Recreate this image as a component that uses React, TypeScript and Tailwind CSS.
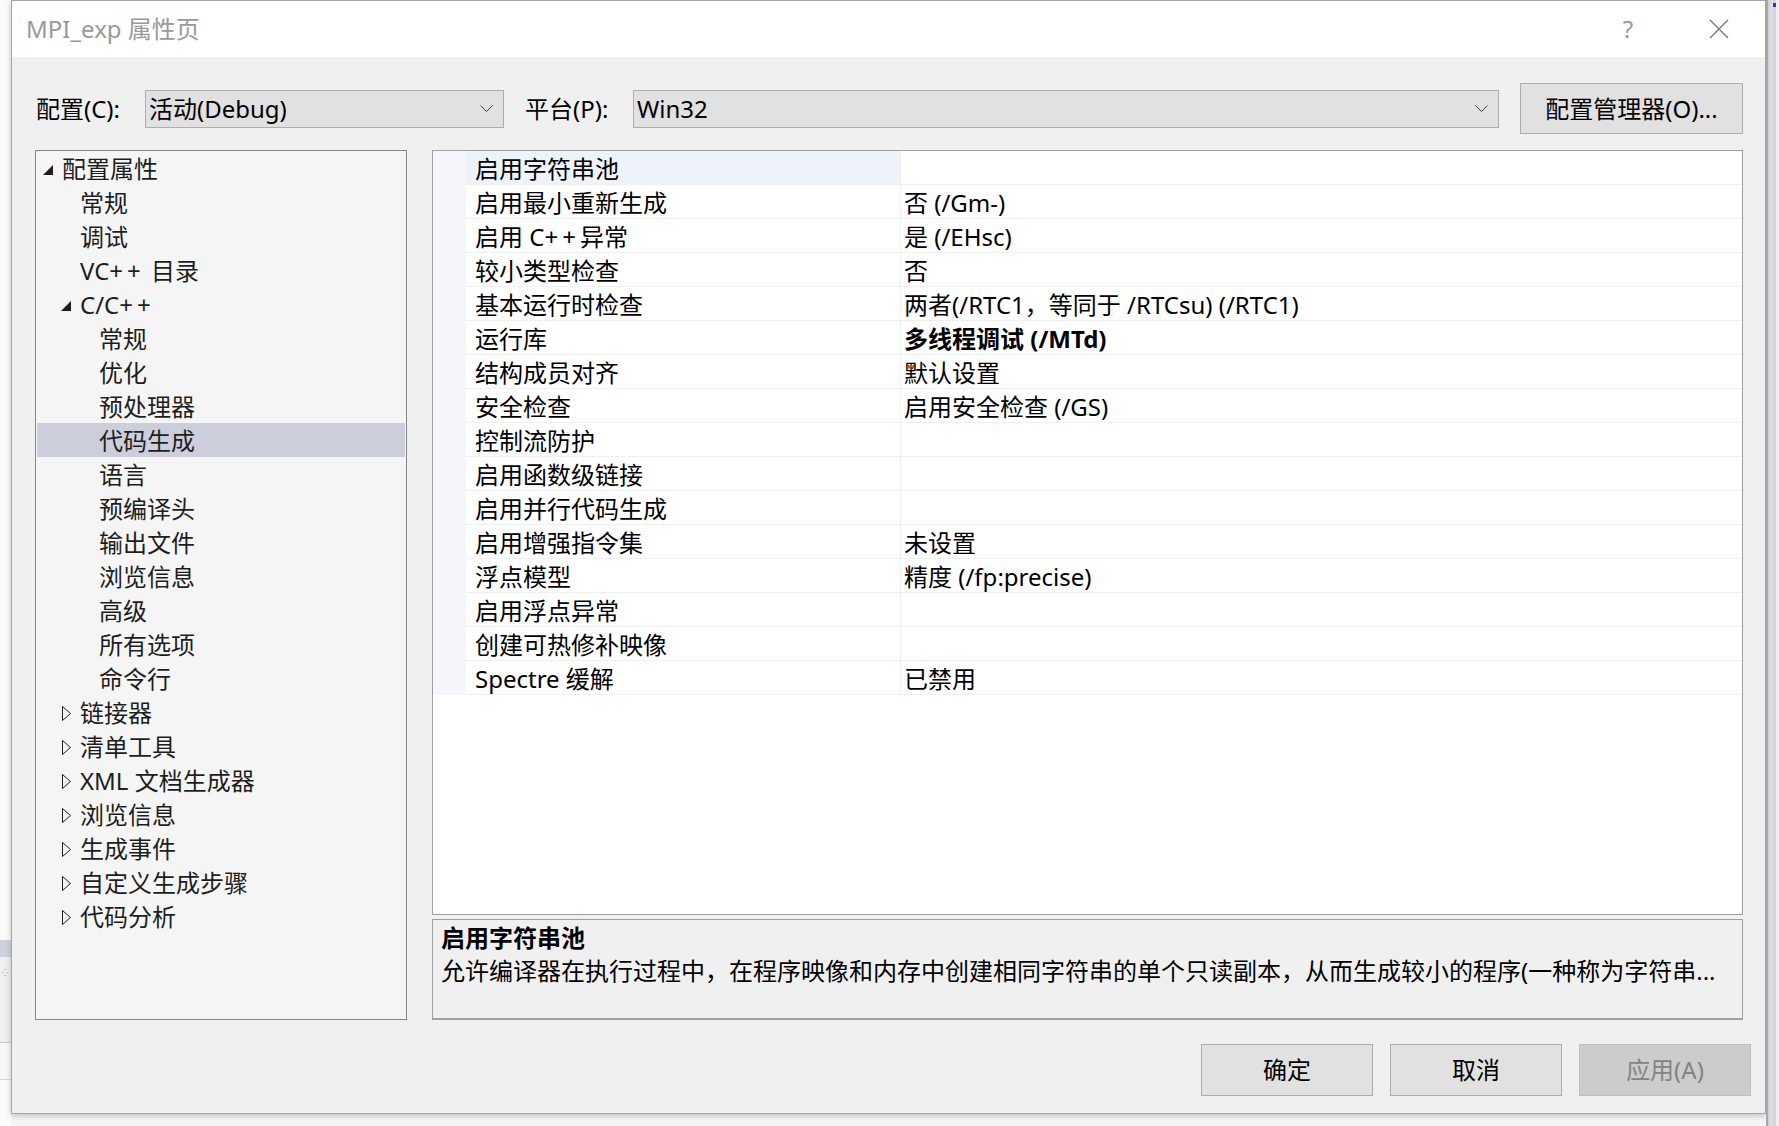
import type { ReactNode } from 'react'

type TreeItem = {
  label: string
  level: 0 | 1 | 2
  arrow?: 'open' | 'closed'
  selected?: boolean
}

const treeItems: TreeItem[] = [
  { label: '配置属性', level: 0, arrow: 'open' },
  { label: '常规', level: 1 },
  { label: '调试', level: 1 },
  { label: 'VC++ 目录', level: 1 },
  { label: 'C/C++', level: 1, arrow: 'open' },
  { label: '常规', level: 2 },
  { label: '优化', level: 2 },
  { label: '预处理器', level: 2 },
  { label: '代码生成', level: 2, selected: true },
  { label: '语言', level: 2 },
  { label: '预编译头', level: 2 },
  { label: '输出文件', level: 2 },
  { label: '浏览信息', level: 2 },
  { label: '高级', level: 2 },
  { label: '所有选项', level: 2 },
  { label: '命令行', level: 2 },
  { label: '链接器', level: 1, arrow: 'closed' },
  { label: '清单工具', level: 1, arrow: 'closed' },
  { label: 'XML 文档生成器', level: 1, arrow: 'closed' },
  { label: '浏览信息', level: 1, arrow: 'closed' },
  { label: '生成事件', level: 1, arrow: 'closed' },
  { label: '自定义生成步骤', level: 1, arrow: 'closed' },
  { label: '代码分析', level: 1, arrow: 'closed' },
]

const props: { name: string; value: string; bold?: boolean }[] = [
  { name: '启用字符串池', value: '' },
  { name: '启用最小重新生成', value: '否 (/Gm-)' },
  { name: '启用 C++ 异常', value: '是 (/EHsc)' },
  { name: '较小类型检查', value: '否' },
  { name: '基本运行时检查', value: '两者(/RTC1，等同于 /RTCsu) (/RTC1)' },
  { name: '运行库', value: '多线程调试 (/MTd)', bold: true },
  { name: '结构成员对齐', value: '默认设置' },
  { name: '安全检查', value: '启用安全检查 (/GS)' },
  { name: '控制流防护', value: '' },
  { name: '启用函数级链接', value: '' },
  { name: '启用并行代码生成', value: '' },
  { name: '启用增强指令集', value: '未设置' },
  { name: '浮点模型', value: '精度 (/fp:precise)' },
  { name: '启用浮点异常', value: '' },
  { name: '创建可热修补映像', value: '' },
  { name: 'Spectre 缓解', value: '已禁用' },
]

const indent = {
  0: 'pl-[8px]',
  1: 'pl-[26px]',
  2: 'pl-[45px]',
}

// the dialog font spaces "++" wider than Noto Sans does
function Label({ text }: { text: string }) {
  const parts = text.split('++')
  if (parts.length === 1) return <>{text}</>
  return (
    <>
      {parts[0]}
      <span className="tracking-[4px]">++</span>
      {parts[1]}
    </>
  )
}

function Chevron() {
  return (
    <svg width="13" height="7" viewBox="0 0 13 7" className="shrink-0">
      <polyline points="0.5,0.5 6.5,6.5 12.5,0.5" fill="none" stroke="#404040" strokeWidth="1" />
    </svg>
  )
}

function Dropdown({ value, width }: { value: string; width: string }) {
  return (
    <div
      className={`${width} h-[38px] flex items-center justify-between pl-[3px] pr-[10px] bg-[#e1e1e1] border border-[#adadad]`}
    >
      <span>{value}</span>
      <Chevron />
    </div>
  )
}

function Button({ children, disabled, width }: { children: ReactNode; disabled?: boolean; width: string }) {
  return (
    <div
      className={`${width} flex items-center justify-center border ${
        disabled ? 'bg-[#cccccc] border-[#bfbfbf] text-[#838383]' : 'bg-[#e1e1e1] border-[#adadad] text-black'
      }`}
    >
      {children}
    </div>
  )
}

function Arrow({ kind }: { kind?: 'open' | 'closed' }) {
  if (kind === 'open') {
    return (
      <svg width="10" height="10" viewBox="0 0 10 10" className="-ml-[1px] mt-[1px]">
        <polygon points="10,0 10,10 0,10" fill="#1e1e1e" />
      </svg>
    )
  }
  if (kind === 'closed') {
    return (
      <svg width="10" height="15" viewBox="0 0 10 15">
        <polygon points="0.5,0.5 8.5,7.5 0.5,14.5" fill="none" stroke="#1e1e1e" strokeWidth="1" />
      </svg>
    )
  }
  return null
}

export default function App() {
  return (
    <div className="w-[1779px] h-[1126px] flex items-start overflow-hidden bg-[#f6f6f6] text-[24px] text-[#1e1e1e] font-['Noto_Sans','Noto_Sans_CJK_SC',sans-serif]">
      {/* what shows of the window behind, left side */}
      <div className="w-[11px] h-full flex flex-col bg-[#fbfbfb]">
        <div className="h-[940px]" />
        <div className="h-[17px] bg-[#cfd1dc]" />
        <div className="h-[85px] bg-[#f0f0f0] flex flex-col pl-[2px] pt-[12px]">
          <span className="text-[8px] leading-none text-[#888]">⁘</span>
        </div>
        <div className="h-px bg-[#c8c8c8]" />
        <div className="h-[36px] bg-[#f8f8f8]" />
        <div className="h-px bg-[#d8d8d8]" />
      </div>

      {/* dialog */}
      <div className="w-[1755px] h-[1114px] flex flex-col bg-[#f0f0f0] border border-[#a5a5a5] shadow-[0_2px_6px_rgba(0,0,0,0.22)]">
        <div className="h-[56px] shrink-0 bg-white flex items-center justify-between pl-[14px] pr-[36px]">
          <span className="text-[24px] text-[#999999]">MPI_exp 属性页</span>
          <div className="flex items-center gap-[71px]">
            <span className="w-[20px] text-center text-[24px] text-[#9a9a9a]">?</span>
            <svg width="20" height="20" viewBox="0 0 20 20">
              <path d="M1 1 L19 19 M19 1 L1 19" stroke="#777" strokeWidth="1.4" />
            </svg>
          </div>
        </div>

        <div className="flex-1 flex flex-col pt-[26px] pl-[23px] pr-[22px]">
          {/* configuration row */}
          <div className="h-[51px] flex items-center text-black">
            <span className="w-[110px] pl-[1px]">配置(C):</span>
            <Dropdown value="活动(Debug)" width="w-[359px]" />
            <span className="w-[129px] pl-[21px]">平台(P):</span>
            <Dropdown value="Win32" width="w-[866px]" />
            <div className="ml-[21px] h-[51px] flex">
              <Button width="w-[223px]">配置管理器(O)...</Button>
            </div>
          </div>

          <div className="mt-[16px] h-[870px] flex gap-[25px]">
            {/* tree */}
            <div className="w-[372px] bg-[#f5f5f5] border border-[#828790]">
              {treeItems.map((item, i) => (
                <div
                  key={i}
                  className={`h-[34px] pt-[2px] flex items-center ${indent[item.level]} ${
                    item.selected ? 'bg-[#cccedb] mx-[1px] !pl-[44px]' : ''
                  }`}
                >
                  <div className="w-[18px] flex items-center">
                    <Arrow kind={item.arrow} />
                  </div>
                  <span className="whitespace-nowrap">
                    <Label text={item.label} />
                  </span>
                </div>
              ))}
            </div>

            {/* property grid + description */}
            <div className="w-[1311px] flex flex-col gap-[4px]">
              <div className="h-[765px] bg-white border border-[#a0a0a0] text-black">
                {props.map((p, i) => (
                  <div key={i} className="h-[34px] flex">
                    <div className="w-[33px] bg-[#f4f6fb]" />
                    <div className="flex-1 flex border-b border-[#f0f0f0]">
                      <div
                        className={`w-[434px] flex items-center pl-[9px] pt-[2px] whitespace-nowrap ${
                          i === 0 ? 'bg-[#eef2f9]' : ''
                        }`}
                      >
                        <Label text={p.name} />
                      </div>
                      <div
                        className={`flex-1 flex items-center pl-[3px] pt-[2px] border-l border-[#f0f0f0] whitespace-nowrap ${
                          p.bold ? 'font-bold' : ''
                        }`}
                      >
                        {p.value}
                      </div>
                    </div>
                  </div>
                ))}
              </div>

              <div className="h-[101px] bg-[#f0f0f0] border border-[#a0a0a0] border-b-2 pl-[8px] pt-[1px] text-black leading-[33px]">
                <div className="font-bold">启用字符串池</div>
                <div className="whitespace-nowrap">
                  允许编译器在执行过程中，在程序映像和内存中创建相同字符串的单个只读副本，从而生成较小的程序(一种称为字符串...
                </div>
              </div>
            </div>
          </div>
        </div>

        {/* bottom buttons */}
        <div className="h-[52px] mb-[17px] mt-[24px] flex justify-end gap-[17px] pr-[14px]">
          <Button width="w-[172px]">确定</Button>
          <Button width="w-[172px]">取消</Button>
          <Button width="w-[172px]" disabled>
            应用(A)
          </Button>
        </div>
      </div>

      {/* window behind, right side */}
      <div className="flex-1 h-full flex">
        <div className="w-[2px] bg-[#a8a8a8]" />
        <div className="w-[5px] bg-gradient-to-r from-[#cfcfcf] to-[#e4e4e4]" />
        <div className="w-[3px] bg-[#d4d4e2] flex flex-col">
          <div className="h-[4px] mt-[3px] bg-[#1c3fb8]" />
        </div>
        <div className="flex-1 bg-[#ededf3]" />
      </div>
    </div>
  )
}
